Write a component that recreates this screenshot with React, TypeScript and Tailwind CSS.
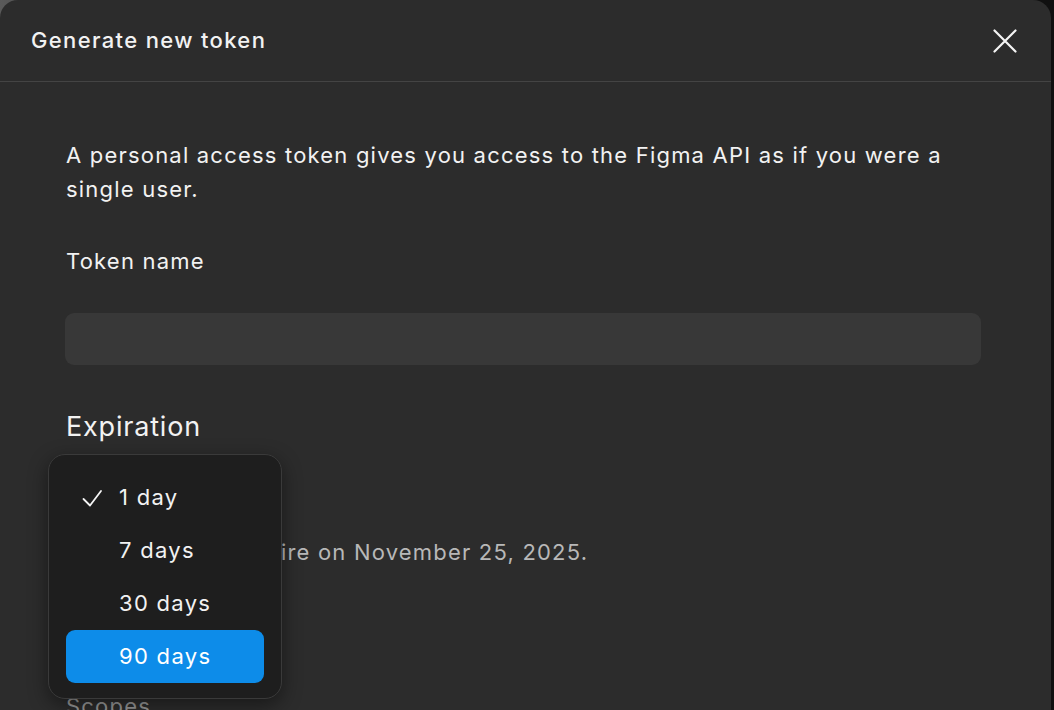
import React from "react";

export default function App() {
  return (
    <div
      className="relative w-[1054px] h-[710px] overflow-hidden bg-[linear-gradient(to_right,#5a5a5a,#101010_20%)]"
      style={{ fontFamily: "Inter, 'Noto Sans', sans-serif" }}
    >
      <div className="w-[1051px] h-[710px] bg-[#2c2c2c] rounded-t-[18px] flex flex-col text-[#f2f2f2]">
        <div className="h-[82px] shrink-0 flex items-center justify-between pl-[31px] pr-[34px] border-b border-[#444444]">
          <div className="text-[22px] font-medium tracking-[1.35px]">Generate new token</div>
          <svg width="24" height="24" viewBox="0 0 24 24">
            <path d="M1.5 1.5 L22.5 22.5 M22.5 1.5 L1.5 22.5" stroke="#f5f5f5" strokeWidth="2.2" strokeLinecap="round" />
          </svg>
        </div>
        <div className="flex flex-col pl-[65px] pr-[70px] pt-[56px]">
          <p className="text-[22px] leading-[34px] tracking-[1.2px] pl-[1px]">
            A personal access token gives you access to the Figma API as if you were a single user.
          </p>
          <div className="mt-[38px] text-[22px] leading-[34px] tracking-[1.2px] pl-[1px]">Token name</div>
          <div className="mt-[35px] h-[52px] rounded-[9px] bg-[#383838]" />
          <div className="mt-[44px] text-[27px] leading-[36px] tracking-[0.8px] pl-[1px]">Expiration</div>
          <div className="mt-[30px] h-[44px] text-[22px] leading-[44px] tracking-[1.2px] pl-[1px]">90 days</div>
          <div className="mt-[16px] text-[22px] leading-[34px] tracking-[1.2px] text-[#b8b8b8] pl-[1px]">
            This token will expire on November 25, 2025.
          </div>
          <div className="mt-[120px] text-[22px] leading-[34px] tracking-[1.2px] text-[#9a9a9a] pl-[1px]">Scopes</div>
        </div>
      </div>

      <div className="absolute left-[48px] top-[454px] w-[234px] h-[245px] rounded-[17px] bg-[#1e1e1e] border border-[#3a3a3a] p-[17px] pt-[16px] shadow-[0_6px_20px_rgba(0,0,0,0.45)] flex flex-col text-[22px] tracking-[1.3px] text-[#f2f2f2]">
        {[
          { label: "1 day", checked: true, active: false },
          { label: "7 days", checked: false, active: false },
          { label: "30 days", checked: false, active: false },
          { label: "90 days", checked: false, active: true },
        ].map((it) => (
          <div
            key={it.label}
            className={
              "h-[53px] shrink-0 flex items-center rounded-[9px] " +
              (it.active ? "bg-[#0d8ce9] text-white" : "")
            }
          >
            <div className="w-[53px] flex justify-center">
              {it.checked ? (
                <svg width="22" height="22" viewBox="0 0 22 22" className="ml-[-2px]">
                  <path d="M2.5 12 L9 18.5 L20 4" fill="none" stroke="#f5f5f5" strokeWidth="1.8" strokeLinecap="round" strokeLinejoin="round" />
                </svg>
              ) : null}
            </div>
            <span>{it.label}</span>
          </div>
        ))}
      </div>
    </div>
  );
}
